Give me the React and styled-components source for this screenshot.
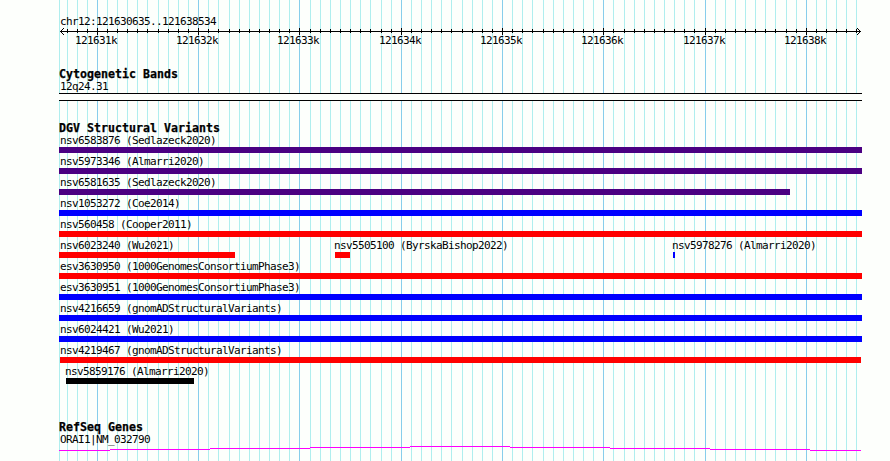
import React from "react";
import styled, { createGlobalStyle } from "styled-components";

const GlobalStyle = createGlobalStyle`
  body { margin: 0; background: #fdfffc; }
`;

const LEFT = 59;
const MAJORS = [97, 198, 299, 401, 502, 603, 705, 806];
const MINORS = [
  67, 77, 87, 107, 117, 127, 137, 147, 158, 168, 178, 188, 208, 218, 229, 239,
  249, 259, 269, 279, 289, 310, 320, 330, 340, 350, 360, 370, 381, 391, 411,
  421, 431, 441, 451, 462, 472, 482, 492, 512, 522, 532, 543, 553, 563, 573,
  583, 593, 613, 624, 634, 644, 654, 664, 674, 684, 694, 715, 725, 735, 745,
  755, 765, 775, 786, 796, 816, 826, 836, 846, 856,
];

const INDIGO = "#4b0082";
const BLUE = "#0000ff";
const RED = "#ff0000";

const ROWS = [
  [{ label: "nsv6583876 (Sedlazeck2020)", color: INDIGO }],
  [{ label: "nsv5973346 (Almarri2020)", color: INDIGO }],
  [{ label: "nsv6581635 (Sedlazeck2020)", color: INDIGO, end: 790 }],
  [{ label: "nsv1053272 (Coe2014)", color: BLUE }],
  [{ label: "nsv560458 (Cooper2011)", color: RED }],
  [
    { label: "nsv6023240 (Wu2021)", color: RED, end: 235 },
    { label: "nsv5505100 (ByrskaBishop2022)", color: RED, start: 335, end: 350, text: 334 },
    { label: "nsv5978276 (Almarri2020)", color: BLUE, start: 673, end: 675, text: 672 },
  ],
  [{ label: "esv3630950 (1000GenomesConsortiumPhase3)", color: RED }],
  [{ label: "esv3630951 (1000GenomesConsortiumPhase3)", color: BLUE }],
  [{ label: "nsv4216659 (gnomADStructuralVariants)", color: BLUE }],
  [{ label: "nsv6024421 (Wu2021)", color: BLUE }],
  [{ label: "nsv4219467 (gnomADStructuralVariants)", color: RED, start: 60, end: 861 }],
  [{ label: "nsv5859176 (Almarri2020)", color: "#000", start: 66, end: 194, text: 65 }],
];

const Browser = styled.main`
  position: relative;
  isolation: isolate;
  width: 890px;
  height: 461px;
  overflow: hidden;
  background: #fdfffc;
  color: #000;
`;

const Grid = styled.svg`
  position: absolute;
  inset: 0;
  z-index: -1;
`;

const Tracks = styled.div`
  display: flex;
  flex-direction: column;
  width: 803px;
  padding-top: 15px;
  margin-left: ${LEFT}px;
`;

const Section = styled.section`
  display: flex;
  flex-direction: column;
  height: ${(p) => p.$height}px;
`;

const Label = styled.div`
  height: 13px;
  padding-left: ${(p) => p.$indent ?? 1}px;
  font: 11px/13px "DejaVu Sans Mono", monospace;
  letter-spacing: -0.622px;
  white-space: pre;
`;

const Title = styled.h2`
  height: 12px;
  margin: 0;
  font: bold 11.6px/12px "DejaVu Sans Mono", monospace;
  letter-spacing: 0.017px;
  white-space: pre;
  -webkit-text-stroke: 0.25px #000;
`;

const Axis = styled.svg`
  display: block;
  flex: none;
`;

const TickLabels = styled.div`
  display: grid;
  grid-template-columns: ${MAJORS.map((x, i) => `${i ? x - MAJORS[i - 1] : x}px`).join(" ")};
  width: 806px;
  margin: -1px 0 0 -39px;
`;

const TickLabel = styled(Label)`
  justify-self: end;
  width: 42px;
  padding: 0;
`;

const Band = styled.div`
  height: 6px;
  border: solid #000;
  border-width: 1px 0;
  background: #fdfffc;
`;

const Row = styled.div`
  display: grid;
  height: 21px;
`;

const Feature = styled.div`
  grid-area: 1 / 1;
`;

const Bar = styled.div`
  width: ${(p) => p.$end - p.$start}px;
  height: 6px;
  margin-left: ${(p) => p.$start - LEFT}px;
  background: ${(p) => p.$color};
`;

const Plot = styled.svg`
  display: block;
`;

function GridLines() {
  return (
    <Grid width="890" height="461" shapeRendering="crispEdges">
      {[59, ...MINORS].map((x) => (
        <rect key={x} x={x} width="1" height="461" fill="#afeeee" />
      ))}
      {MAJORS.map((x) => (
        <rect key={x} x={x} width="1" height="461" fill="#87ceeb" />
      ))}
    </Grid>
  );
}

function Ruler() {
  return (
    <Axis width="803" height="7" viewBox="59 28 803 7">
      <g shapeRendering="crispEdges">
        <rect x="60" y="31" width="801" height="1" />
        {MINORS.map((x) => <rect key={x} x={x} y="29" width="1" height="4" />)}
        {MAJORS.map((x) => <rect key={x} x={x} y="28" width="1" height="7" />)}
        {[1, 2, 3].map((n) => (
          <g key={n}>
            <rect x={60 + n} y={31 - n} width="1" height="1" />
            <rect x={60 + n} y={31 + n} width="1" height="1" />
            <rect x={860 - n} y={31 - n} width="1" height="1" />
            <rect x={860 - n} y={31 + n} width="1" height="1" />
          </g>
        ))}
      </g>
    </Axis>
  );
}

export default function App() {
  return (
    <>
      <GlobalStyle />
      <Browser>
        <GridLines />
        <Tracks>
          <Section $height={53}>
            <Label>chr12:121630635..121638534</Label>
            <Ruler />
            <TickLabels>
              {MAJORS.map((x, i) => <TickLabel key={x}>{`12163${i + 1}k`}</TickLabel>)}
            </TickLabels>
          </Section>
          <Section $height={54}>
            <Title>Cytogenetic Bands</Title>
            <Label>12q24.31</Label>
            <Band />
          </Section>
          <Section $height={299}>
            <Title>DGV Structural Variants</Title>
            {ROWS.map((features) => (
              <Row key={features[0].label}>
                {features.map(({ label, color, start = LEFT, end = 862, text = 60 }) => (
                  <Feature key={label}>
                    <Label $indent={text - LEFT}>{label}</Label>
                    <Bar $start={start} $end={end} $color={color} />
                  </Feature>
                ))}
              </Row>
            ))}
          </Section>
          <Section $height={40}>
            <Title>RefSeq Genes</Title>
            <Label>ORAI1|NM_032790</Label>
            <Plot width="803" height="15" viewBox="59 446 803 15" shapeRendering="crispEdges">
              {[450, 449, 448, 447, 446, 447, 448, 449, 450].map((y, i) => {
                const x = i ? 10 + i * 100 : 59;
                const end = Math.min(110 + i * 100, 861);
                return <rect key={i} x={x} y={y} width={end - x} height="1" fill="#f0f" />;
              })}
            </Plot>
          </Section>
        </Tracks>
      </Browser>
    </>
  );
}
